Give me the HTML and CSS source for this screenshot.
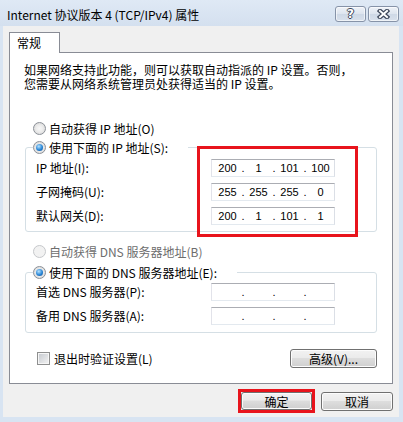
FILE: index.html
```html
<!DOCTYPE html>
<html lang="zh-CN">
<head>
    <meta charset="UTF-8">
    <meta name="viewport" content="width=device-width, initial-scale=1.0">
    <title>Internet 协议版本 4 (TCP/IPv4) 属性</title>
    <link rel="stylesheet" href="styles.css">
</head>
<body>

<div class="window">
    <div class="titlebar">
        <span class="title">Internet 协议版本 4 (TCP/IPv4) 属性</span>
        <div class="caption-buttons">
            <button class="caption-btn help">?</button>
            <button class="caption-btn close">
                <svg width="13" height="10" viewBox="0 0 13 10">
                    <path d="M3 2 L10 8 M10 2 L3 8" stroke="#3c4659" stroke-width="4.4" stroke-linecap="square" fill="none"/>
                    <path d="M3 2 L10 8 M10 2 L3 8" stroke="#fff" stroke-width="2" stroke-linecap="square" fill="none"/>
                </svg>
            </button>
        </div>
    </div>

    <div class="client">
        <div class="tabs">
            <div class="tab active">常规</div>
        </div>

        <div class="panel">
            <p class="intro">如果网络支持此功能，则可以获取自动指派的 IP 设置。否则，<br>您需要从网络系统管理员处获得适当的 IP 设置。</p>

            <!-- IP address -->
            <div class="option standalone"><span class="radio"></span>自动获得 IP 地址(O)</div>
            <fieldset class="group">
                <legend class="option"><span class="radio checked"></span>使用下面的 IP 地址(S):</legend>
                <div class="group-body">
                    <div class="labels">
                        <span>IP 地址(I):</span>
                        <span>子网掩码(U):</span>
                        <span>默认网关(D):</span>
                    </div>
                    <div class="ip-list marked">
                        <div class="ip"><span class="octet">200</span><span class="dot">.</span><span class="octet">1</span><span class="dot">.</span><span class="octet">101</span><span class="dot">.</span><span class="octet">100</span></div>
                        <div class="ip"><span class="octet">255</span><span class="dot">.</span><span class="octet">255</span><span class="dot">.</span><span class="octet">255</span><span class="dot">.</span><span class="octet">0</span></div>
                        <div class="ip"><span class="octet">200</span><span class="dot">.</span><span class="octet">1</span><span class="dot">.</span><span class="octet">101</span><span class="dot">.</span><span class="octet">1</span></div>
                    </div>
                </div>
            </fieldset>

            <!-- DNS -->
            <div class="option standalone dns disabled"><span class="radio disabled"></span>自动获得 DNS 服务器地址(B)</div>
            <fieldset class="group dns-group">
                <legend class="option"><span class="radio checked"></span>使用下面的 DNS 服务器地址(E):</legend>
                <div class="group-body">
                    <div class="labels">
                        <span>首选 DNS 服务器(P):</span>
                        <span>备用 DNS 服务器(A):</span>
                    </div>
                    <div class="ip-list">
                        <div class="ip"><span class="octet"></span><span class="dot">.</span><span class="octet"></span><span class="dot">.</span><span class="octet"></span><span class="dot">.</span><span class="octet"></span></div>
                        <div class="ip"><span class="octet"></span><span class="dot">.</span><span class="octet"></span><span class="dot">.</span><span class="octet"></span><span class="dot">.</span><span class="octet"></span></div>
                    </div>
                </div>
            </fieldset>

            <div class="panel-footer">
                <label class="checkbox"><span class="check"></span>退出时验证设置(L)</label>
                <button class="btn advanced">高级(V)...</button>
            </div>
        </div>

        <div class="actions">
            <div class="ok-mark"><button class="btn ok">确定</button></div>
            <button class="btn cancel">取消</button>
        </div>
    </div>
</div>

</body>
</html>
```

FILE: styles.css
```css
body {
    margin: 0;
    background-color: #d8e4f2;
    font-family: "Noto Sans CJK SC", sans-serif;
    font-size: 12px;
    color: #000;
}

.window {
    width: 403px;
    height: 422px;
    display: flex;
    flex-direction: column;
}

/* title bar */
.titlebar {
    height: 26px;
    box-sizing: border-box;
    padding: 2px 4px 0 7px;
    display: flex;
    align-items: center;
    justify-content: space-between;
    background: linear-gradient(#dfe9f5, #d4e0ef);
}

.title {
    font-size: 12px;
}

.caption-buttons {
    display: flex;
    gap: 2px;
}

.caption-btn {
    width: 31px;
    height: 16px;
    padding: 0;
    box-sizing: border-box;
    border: 1px solid #8693a8;
    border-radius: 3px;
    background: linear-gradient(#eef2f8, #dde4ee 50%, #ced8e6 51%, #d9e1ec);
    box-shadow: inset 0 0 0 1px rgba(255, 255, 255, 0.6);
    display: flex;
    align-items: center;
    justify-content: center;
}

.caption-btn.help {
    font-family: "DejaVu Sans", sans-serif;
    font-weight: bold;
    font-size: 12px;
    line-height: 14px;
    color: #fff;
    text-shadow: 1px 0 0 #3c4659, -1px 0 0 #3c4659, 0 1px 0 #3c4659, 0 -1px 0 #3c4659;
}

/* dialog body */
.client {
    margin: 0 4px 0 3px;
    height: 391px;
    box-sizing: border-box;
    padding: 6px 6px 0 6px;
    background-color: #f0f0f0;
}

.tabs {
    display: flex;
}

.tab {
    width: 51px;
    height: 21px;
    box-sizing: border-box;
    padding-left: 7px;
    line-height: 20px;
    border: 1px solid #898c95;
    border-bottom: none;
    background-color: #fff;
    margin-bottom: -1px;
    position: relative;
    z-index: 1;
}

.panel {
    height: 332px;
    box-sizing: border-box;
    border: 1px solid #898c95;
    background-color: #fff;
    padding-top: 10px;
}

.intro {
    margin: 0 0 0 14px;
    line-height: 14px;
}

.option {
    display: flex;
    align-items: center;
    gap: 3px;
    height: 16px;
}

.option.standalone {
    margin: 29px 0 0 23px;
}

.option.dns {
    margin-top: 11px;
}

.option.disabled {
    color: #6d6d6d;
}

.radio {
    width: 13px;
    height: 13px;
    box-sizing: border-box;
    border-radius: 50%;
    border: 1px solid #8b9097;
    background: radial-gradient(circle, #f7f7f7 0, #ededed 40%, #d2d2d2 100%);
    position: relative;
    flex: none;
}

.radio.checked::after {
    content: "";
    position: absolute;
    left: 2px;
    top: 2px;
    width: 7px;
    height: 7px;
    border-radius: 50%;
    background: radial-gradient(circle at 40% 35%, #b6e3ff 0, #2a86d6 55%, #0b4a8f 100%);
}

.radio.disabled {
    border-color: #c6c8cb;
    background: #f2f2f2;
}

/* group boxes */
.group {
    margin: 3px 15px 0;
    padding: 4px 10px 6px 7px;
    border: 1px solid #d5dfe5;
    border-radius: 3px;
    min-width: 0;
}

.group legend {
    padding: 0 20px 0 0;
}

.dns-group {
    margin-top: 5px;
    padding-top: 3px;
    padding-bottom: 7px;
}

.group-body {
    display: flex;
    margin-left: 3px;
}

.labels {
    width: 175px;
    display: flex;
    flex-direction: column;
    gap: 6px;
}

.labels span {
    height: 18px;
    line-height: 18px;
}

.ip-list {
    width: 124px;
    display: flex;
    flex-direction: column;
    gap: 6px;
    position: relative;
}

.ip-list.marked::after {
    content: "";
    position: absolute;
    left: -14px;
    right: -23px;
    top: -13px;
    bottom: -12px;
    border: 3px solid #e8141c;
}

.ip {
    height: 18px;
    box-sizing: border-box;
    border: 1px solid;
    border-color: #abadb3 #dbdfe6 #e3e9ef #e2e3ea;
    padding-left: 3px;
    display: flex;
    align-items: center;
    font-family: "Liberation Sans", sans-serif;
    font-size: 11px;
}

.octet {
    width: 25px;
    text-align: center;
}

.dot {
    width: 6px;
    text-align: center;
}

/* footer row inside the tab */
.panel-footer {
    margin: 16px 15px 0;
    display: flex;
    justify-content: space-between;
    align-items: flex-start;
}

.checkbox {
    display: flex;
    align-items: center;
    gap: 4px;
    height: 16px;
    padding: 1px 0 0 12px;
}

.check {
    width: 13px;
    height: 13px;
    box-sizing: border-box;
    border: 1px solid #8e8f8f;
    background: linear-gradient(135deg, #c4c8ce, #f4f4f4);
    box-shadow: inset 0 0 0 1px #f6f6f6;
}

.btn {
    height: 19px;
    box-sizing: border-box;
    padding: 0;
    border: 1px solid #707070;
    border-radius: 3px;
    background: linear-gradient(#f2f2f2, #ebebeb 45%, #dddddd 50%, #cfcfcf);
    box-shadow: inset 0 0 0 1px #fcfcfc;
    font-family: "Noto Sans CJK SC", sans-serif;
    font-size: 12px;
    color: #000;
}

.advanced {
    width: 87px;
}

/* dialog buttons */
.actions {
    display: flex;
    justify-content: flex-end;
    align-items: center;
    gap: 6px;
    margin-top: 5px;
}

.ok-mark {
    border: 3px solid #e8141c;
}

.ok {
    display: block;
    width: 71px;
    height: 18px;
}

.cancel {
    width: 72px;
}
```
